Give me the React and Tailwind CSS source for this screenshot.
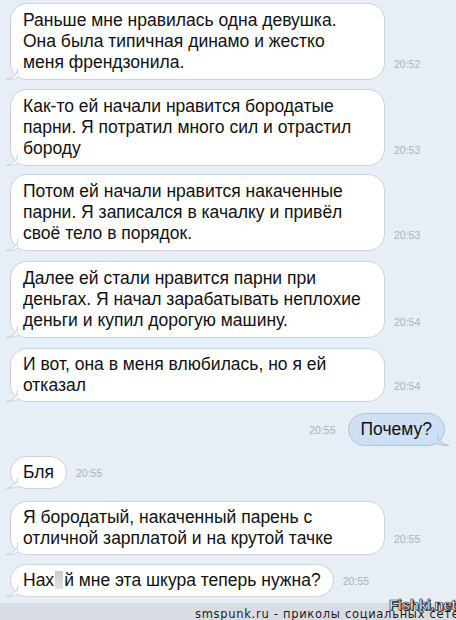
import React from 'react';

const font = { fontFamily: '"Liberation Sans", Arial, sans-serif' };

const Tail = ({ side = 'left', fill = '#ffffff', stroke = '#c9d1db' }) => (
    <svg
        width="12"
        height="12"
        viewBox="0 0 12 12"
        className={side === 'left' ? 'absolute -left-[5px] bottom-[-1px]' : 'absolute -right-[5px] bottom-[-1px]'}
    >
        {side === 'left' ? (
            <path d="M12 0 C11 6 8 10 0 11.5 C6 11.5 10 10.5 12 9.5 Z" fill={fill} stroke={stroke} strokeWidth="1" />
        ) : (
            <path d="M0 0 C1 6 4 10 12 11.5 C6 11.5 2 10.5 0 9.5 Z" fill={fill} stroke={stroke} strokeWidth="1" />
        )}
    </svg>
);

const Time = ({ children, className = '' }) => (
    <span className={'text-[10.5px] leading-[12px] text-[#aab1bb] ' + className} style={font}>
        {children}
    </span>
);

const Incoming = ({ lines, time, wide = true, className = '' }) => (
    <div className={'flex items-end pl-[10px] ' + className}>
        <div
            className={
                'relative bg-white border border-[#cbd2dc] rounded-[17px] px-[12px] text-[17.5px] leading-[21px] text-[#111] ' +
                (lines.length > 2 ? 'py-[6px] ' : 'py-[5px] ') +
                (wide ? 'w-[375px]' : '')
            }
            style={font}
        >
            {lines.map((l, i) => (
                <div key={i} className="whitespace-nowrap">{l}</div>
            ))}
            <Tail side="left" />
        </div>
        <Time className="ml-[9px] mb-[10px]">{time}</Time>
    </div>
);

export default function App() {
    return (
        <div className="w-[456px] h-[620px] overflow-hidden bg-[#e8eef6] flex flex-col" style={font}>
            <div className="flex flex-col pt-[3px]">
                <Incoming
                    lines={['Раньше мне нравилась одна девушка.', 'Она была типичная динамо и жестко', 'меня френдзонила.']}
                    time="20:52"
                />
                <Incoming
                    className="mt-[9px]"
                    lines={['Как-то ей начали нравится бородатые', 'парни. Я потратил много сил и отрастил', 'бороду']}
                    time="20:53"
                />
                <Incoming
                    className="mt-[8px]"
                    lines={['Потом ей начали нравится накаченные', 'парни. Я записался в качалку и привёл', 'своё тело в порядок.']}
                    time="20:53"
                />
                <Incoming
                    className="mt-[10px]"
                    lines={['Далее ей стали нравится парни при', 'деньгах. Я начал зарабатывать неплохие', 'деньги и купил дорогую машину.']}
                    time="20:54"
                />
                <Incoming
                    className="mt-[10px]"
                    lines={['И вот, она в меня влюбилась, но я ей', 'отказал']}
                    time="20:54"
                />

                <div className="flex items-center justify-end pr-[11px] mt-[11px]">
                    <Time className="mr-[12px]">20:55</Time>
                    <div className="relative bg-[#cfe0f5] border border-[#a9c2de] rounded-[17px] px-[12px] py-[5px] text-[17.5px] leading-[21px] text-[#111]">
                        Почему?
                        <Tail side="right" fill="#cfe0f5" stroke="#a9c2de" />
                    </div>
                </div>

                <Incoming className="mt-[10px]" wide={false} lines={['Бля']} time="20:55" />

                <Incoming
                    className="mt-[12px]"
                    lines={['Я бородатый, накаченный парень с', 'отличной зарплатой и на крутой тачке']}
                    time="20:55"
                />
                <Incoming
                    className="mt-[9px]"
                    wide={false}
                    lines={[
                        <>
                            Нах
                            <span className="inline-block align-[-3px] w-[8px] h-[18px] mx-[1px] bg-gradient-to-b from-[#c7c9cc] to-[#e2e4e6]" />
                            й мне эта шкура теперь нужна?
                        </>,
                    ]}
                    time="20:55"
                />
            </div>

            <div className="relative mt-[6px] h-[17px] shrink-0 bg-[#d9dde3] pl-[195px] overflow-hidden">
                <div
                    className="text-[11.5px] leading-[22px] text-[#1c1c1c] tracking-[0.7px] whitespace-nowrap"
                    style={{ fontFamily: '"DejaVu Sans", Verdana, sans-serif' }}
                >
                    smspunk.ru - приколы социальных сетей
                </div>
            </div>
            <span
                className="absolute left-[389px] top-[596px] text-[15px] leading-[17px] font-bold text-white tracking-[-0.3px]"
                style={{ fontFamily: '"Liberation Sans", Arial, sans-serif', WebkitTextStroke: '0.7px #222', textShadow: '1px 1px 0 #333' }}
            >
                Fishki.net
            </span>
        </div>
    );
}
